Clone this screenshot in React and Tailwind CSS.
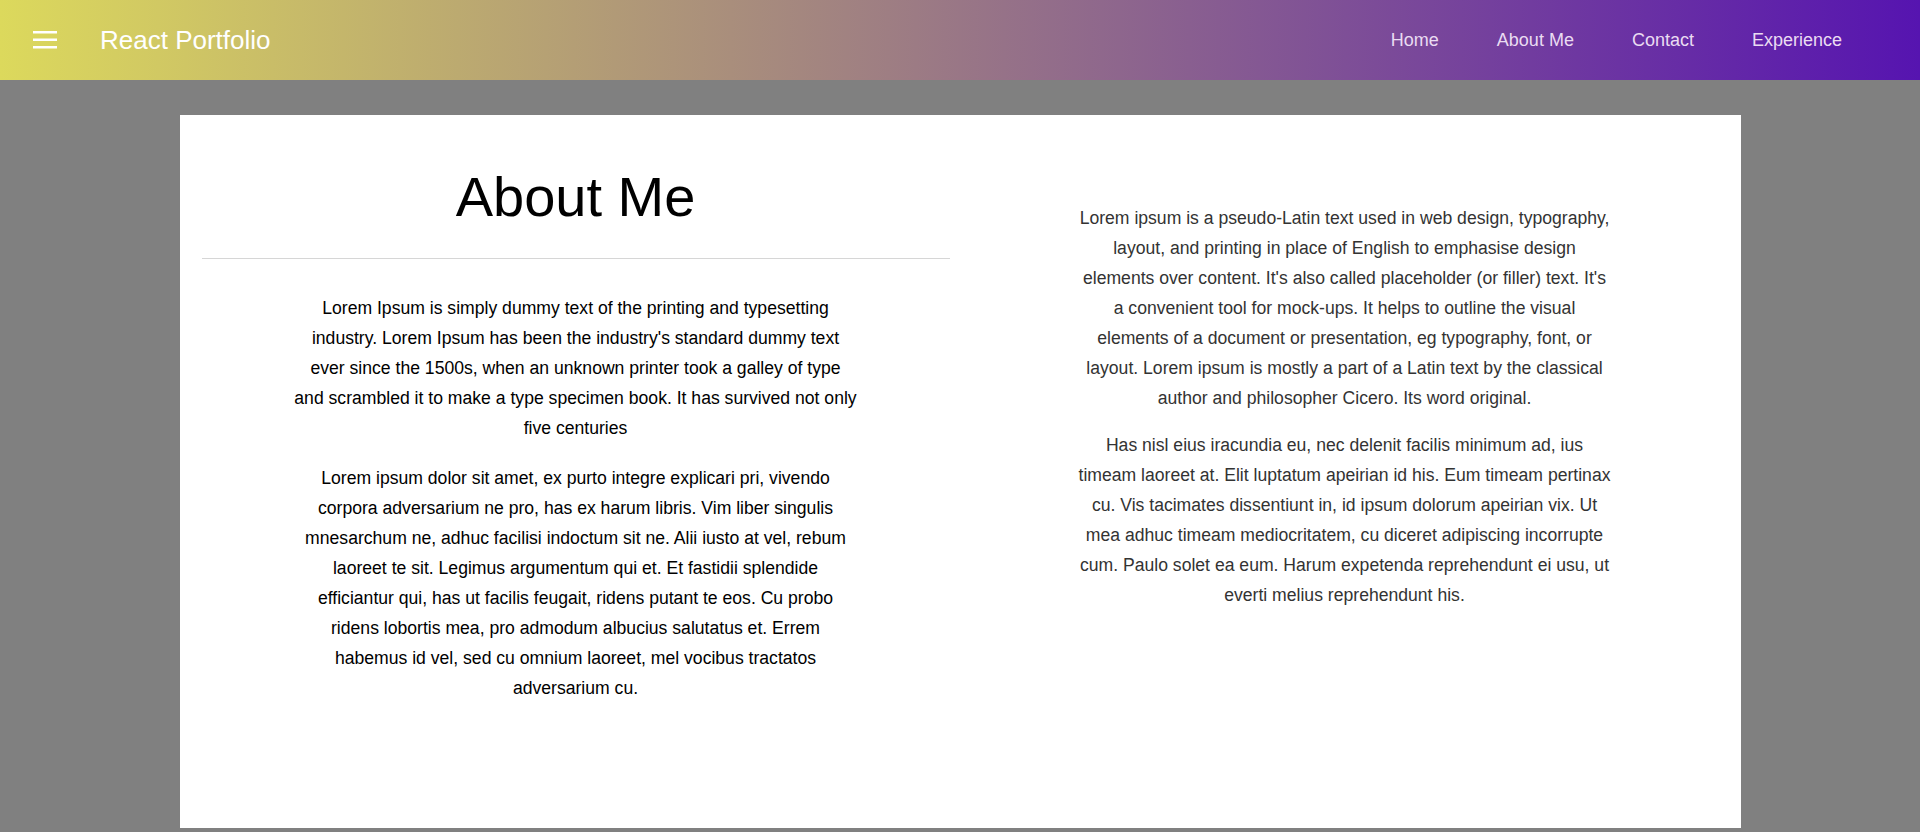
import React from 'react';

const NAV = ['Home', 'About Me', 'Contact', 'Experience'];

const LEFT_TEXT = [
  "Lorem Ipsum is simply dummy text of the printing and typesetting industry. Lorem Ipsum has been the industry's standard dummy text ever since the 1500s, when an unknown printer took a galley of type and scrambled it to make a type specimen book. It has survived not only five centuries",
  'Lorem ipsum dolor sit amet, ex purto integre explicari pri, vivendo corpora adversarium ne pro, has ex harum libris. Vim liber singulis mnesarchum ne, adhuc facilisi indoctum sit ne. Alii iusto at vel, rebum laoreet te sit. Legimus argumentum qui et. Et fastidii splendide efficiantur qui, has ut facilis feugait, ridens putant te eos. Cu probo ridens lobortis mea, pro admodum albucius salutatus et. Errem habemus id vel, sed cu omnium laoreet, mel vocibus tractatos adversarium cu.',
];

const RIGHT_TEXT = [
  "Lorem ipsum is a pseudo-Latin text used in web design, typography, layout, and printing in place of English to emphasise design elements over content. It's also called placeholder (or filler) text. It's a convenient tool for mock-ups. It helps to outline the visual elements of a document or presentation, eg typography, font, or layout. Lorem ipsum is mostly a part of a Latin text by the classical author and philosopher Cicero. Its word original.",
  'Has nisl eius iracundia eu, nec delenit facilis minimum ad, ius timeam laoreet at. Elit luptatum apeirian id his. Eum timeam pertinax cu. Vis tacimates dissentiunt in, id ipsum dolorum apeirian vix. Ut mea adhuc timeam mediocritatem, cu diceret adipiscing incorrupte cum. Paulo solet ea eum. Harum expetenda reprehendunt ei usu, ut everti melius reprehendunt his.',
];

function MenuIcon() {
  return (
    <svg width="24" height="18" viewBox="0 0 24 18" fill="white">
      <rect x="0" y="0" width="24" height="2.5" />
      <rect x="0" y="7.5" width="24" height="2.5" />
      <rect x="0" y="15" width="24" height="2.5" />
    </svg>
  );
}

export default function App() {
  return (
    <div className="min-h-[832px] bg-[#808080] font-['Liberation_Sans',Arial,sans-serif]">
      <header className="h-20 flex items-center bg-[linear-gradient(to_right,#dcd95c,#5614b0)]">
        <button className="ml-[33px] flex items-center">
          <MenuIcon />
        </button>
        <h6 className="ml-[43px] text-[26px] leading-[30px] text-white">React Portfolio</h6>
        <nav className="ml-auto mr-[78px] flex gap-[58px]">
          {NAV.map(n => (
            <a key={n} className="text-[18px] text-[#eadcf2] cursor-pointer">{n}</a>
          ))}
        </nav>
      </header>

      <main className="pt-[35px] flex justify-center">
        <div className="w-[1561px] h-[713px] bg-white px-[22px] grid grid-cols-2 gap-[21px]">
          {/* left */}
          <section className="flex flex-col items-center">
            <h1 className="mt-[50px] text-[56px] leading-[64px] text-black">About Me</h1>
            <hr className="w-full mt-[29px] border-t border-[#d6d6d6]" />
            <div className="w-[563.5px] mt-[34px] text-center text-[17.6px] leading-[30px] text-black">
              <p>{LEFT_TEXT[0]}</p>
              <p className="mt-[20px]">{LEFT_TEXT[1]}</p>
            </div>
          </section>

          {/* right */}
          <section className="flex justify-center">
            <div className="w-[534px] mt-[88px] text-center text-[17.6px] leading-[30px] text-[#333]">
              <p>{RIGHT_TEXT[0]}</p>
              <p className="mt-[17px]">{RIGHT_TEXT[1]}</p>
            </div>
          </section>
        </div>
      </main>
    </div>
  );
}
